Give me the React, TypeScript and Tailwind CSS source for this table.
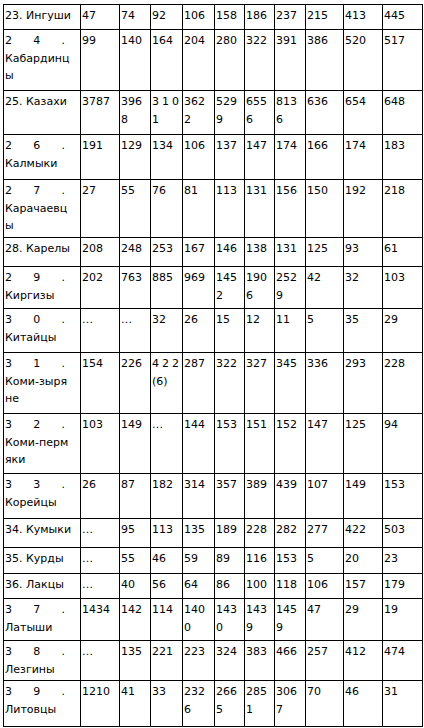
import { FC } from "react";

// column widths incl. right border, row heights incl. bottom border
const colW = ["w-[77px]", "w-[39px]", "w-[31px]", "w-[32px]", "w-[32px]", "w-[30px]", "w-[30px]", "w-[31px]", "w-[38px]", "w-[39px]", "w-[40px]"];

type Row = { h: string; cells: string[] };

const rows: Row[] = [
  { h: "h-[25px]", cells: ["23. Ингуши", "47", "74", "92", "106", "158", "186", "237", "215", "413", "445"] },
  { h: "h-[61px]", cells: ["~2 4 .|Кабардинц|ы", "99", "140", "164", "204", "280", "322", "391", "386", "520", "517"] },
  { h: "h-[44px]", cells: ["25. Казахи", "3787", "396|8", "~310|1", "362|2", "529|9", "655|6", "813|6", "636", "654", "648"] },
  { h: "h-[45px]", cells: ["~2 6 .|Калмыки", "191", "129", "134", "106", "137", "147", "174", "166", "174", "183"] },
  { h: "h-[58px]", cells: ["~2 7 .|Карачаевц|ы", "27", "55", "76", "81", "113", "131", "156", "150", "192", "218"] },
  { h: "h-[29px]", cells: ["28. Карелы", "208", "248", "253", "167", "146", "138", "131", "125", "93", "61"] },
  { h: "h-[42px]", cells: ["~2 9 .|Киргизы", "202", "763", "885", "969", "145|2", "190|6", "252|9", "42", "32", "103"] },
  { h: "h-[44px]", cells: ["~3 0 .|Китайцы", "…", "…", "32", "26", "15", "12", "11", "5", "35", "29"] },
  { h: "h-[61px]", cells: ["~3 1 .|Коми-зыря|не", "154", "226", "~422|(6)", "287", "322", "327", "345", "336", "293", "228"] },
  { h: "h-[60px]", cells: ["~3 2 .|Коми-перм|яки", "103", "149", "…", "144", "153", "151", "152", "147", "125", "94"] },
  { h: "h-[45px]", cells: ["~3 3 .|Корейцы", "26", "87", "182", "314", "357", "389", "439", "107", "149", "153"] },
  { h: "h-[29px]", cells: ["34. Кумыки", "…", "95", "113", "135", "189", "228", "282", "277", "422", "503"] },
  { h: "h-[26px]", cells: ["35. Курды", "…", "55", "46", "59", "89", "116", "153", "5", "20", "23"] },
  { h: "h-[25px]", cells: ["36. Лакцы", "…", "40", "56", "64", "86", "100", "118", "106", "157", "179"] },
  { h: "h-[42px]", cells: ["~3 7 .|Латыши", "1434", "142", "114", "140|0", "143|0", "143|9", "145|9", "47", "29", "19"] },
  { h: "h-[40px]", cells: ["~3 8 .|Лезгины", "…", "135", "221", "223", "324", "383", "466", "257", "412", "474"] },
  { h: "h-[46px]", cells: ["~3 9 .|Литовцы", "1210", "41", "33", "232|6", "266|5", "285|1", "306|7", "70", "46", "31"] },
];

const Line: FC<{ text: string; first: boolean }> = ({ text, first }) => {
  if (!text.startsWith("~")) return <div className="whitespace-nowrap">{text}</div>;
  const body = text.slice(1);
  const parts = body.includes(" ") ? body.split(" ") : body.split("");
  return (
    <div className={first ? "flex justify-between w-[60px]" : "flex justify-between w-[27px]"}>
      {parts.map((p, i) => (
        <span key={i}>{p}</span>
      ))}
    </div>
  );
};

export default function App() {
  return (
    <div className="bg-white w-[424px] h-[728px] pt-[4px] pl-[3px] text-black text-[11px] leading-[17.5px] [font-family:'DejaVu_Sans',Verdana,sans-serif]">
      <div className="w-[420px] border-l border-t border-black">
        {rows.map((r, ri) => (
          <div key={ri} className={`flex border-b border-black ${r.h}`}>
            {r.cells.map((c, ci) => (
              <div key={ci} className={`${colW[ci]} shrink-0 border-r border-black pl-px pt-[2px] overflow-hidden`}>
                {c.split("|").map((ln, li) => (
                  <Line key={li} text={ln} first={ci === 0} />
                ))}
              </div>
            ))}
          </div>
        ))}
      </div>
    </div>
  );
}
